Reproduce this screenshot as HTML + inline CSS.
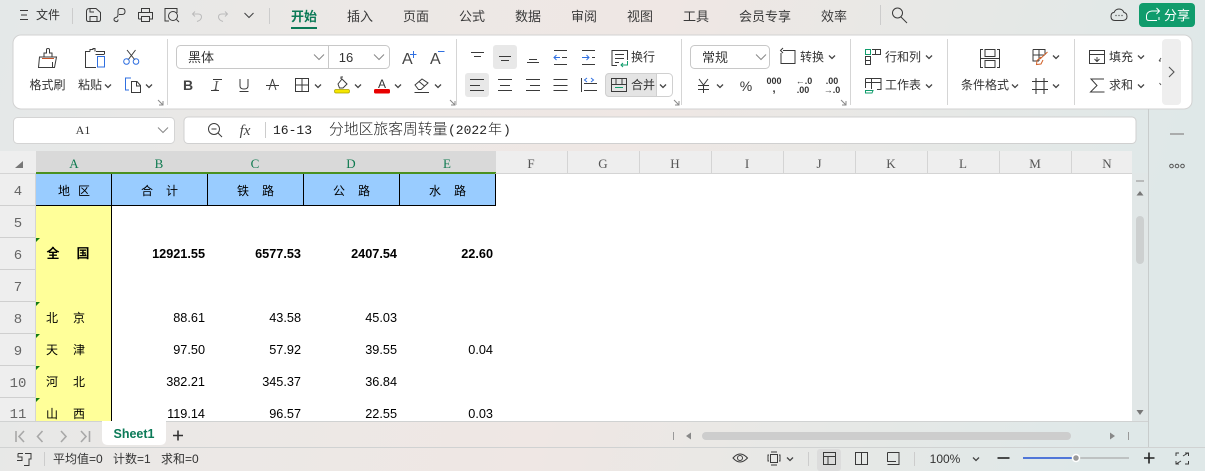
<!DOCTYPE html>
<html><head><meta charset="utf-8"><style>
html,body{margin:0;padding:0;width:1205px;height:471px;overflow:hidden;background:#e8e8e8}
svg{display:block;font-family:"Liberation Sans","Noto Sans CJK SC",sans-serif}
.i{fill:none;stroke:#3a3a3a;stroke-width:1}
.b{fill:none;stroke:#2f6fe0;stroke-width:1}
.t{font-size:12px;fill:#333;text-anchor:middle}
.tab{font-size:13px;fill:#3a3a3a;text-anchor:middle}
.h{font-size:13px;fill:#555;text-anchor:middle;font-family:"Liberation Serif",serif}
.hs{font-size:13px;fill:#0f7a50;text-anchor:middle;font-family:"Liberation Serif",serif}
.r{font-size:14px;fill:#666;text-anchor:middle;font-family:"Liberation Mono",monospace}
.n{font-size:12.7px;fill:#000;text-anchor:end}
.nb{font-size:12.7px;fill:#000;text-anchor:end;font-weight:bold}
.z{font-size:12px;fill:#000;text-anchor:middle;font-family:"Liberation Sans","Noto Sans CJK SC",sans-serif}
.zb{font-size:13px;fill:#000;text-anchor:middle;font-weight:bold}
.f{font-size:15px;fill:#222;font-family:"Noto Sans CJK SC",sans-serif;font-weight:300}
.s{font-size:12px;fill:#333}
.d{font-size:9px;fill:#333;text-anchor:middle;font-weight:bold}
</style></head><body>
<svg xmlns="http://www.w3.org/2000/svg" width="1205" height="471" viewBox="0 0 1205 471">
<defs>
<linearGradient id="bg" x1="0" y1="0" x2="1" y2="0.12">
<stop offset="0" stop-color="#e4e8e8"/><stop offset=".25" stop-color="#ebe8e6"/><stop offset=".55" stop-color="#efe7e4"/><stop offset=".8" stop-color="#e6e8e6"/><stop offset="1" stop-color="#dfe8e8"/>
</linearGradient>
<path id="ch" d="M-3 -1.500 L0 1.500 L3 -1.500" fill="none" stroke="#444" stroke-width="1.300"/>
<path id="chl" d="M-5 -2.500 L0 2.500 L5 -2.500" fill="none" stroke="#888" stroke-width="1"/>
<path id="ln" d="M0 0 L5 5 M5 1 V5 H1" fill="none" stroke="#888" stroke-width="1"/>
</defs>
<rect width="1205" height="471" fill="url(#bg)"/>

<!-- title bar -->
<path class="i" d="M20 10.500H28M21 15H27M20 19.500H28"/>
<text x="48" y="19" class="t">文件</text>
<path d="M72.500 8V24M269.500 8V24M880.500 5V25" stroke="#ccc"/>
<path class="i" d="M86.500 11.500Q86.500 8.500 89.500 8.500H96L100.500 12.500V19.500Q100.500 21.500 98.500 21.500H88.500Q86.500 21.500 86.500 19.500ZM90 21.500V16.500H97V21.500M90 9V12H94"/>
<path class="i" d="M119 14.500H122Q125 14.500 125 11.500T122 8.500H120Q118 8.500 118 11V14.500Q118 17 116 17.500H116Q114 18 114 19.500T116 21.500T118 19.500"/>
<path class="i" d="M141.500 12V8.500H149.500V12M138.500 19V12.500H152.500V19H149M141.500 16.500H149.500V21.500H141.500ZM138.500 19H141"/>
<path class="i" d="M172 8.500H165V21H169M172 8.500 177 8.500V13"/><circle class="i" cx="173" cy="16" r="4.500"/><path class="i" d="M176.500 19.500 179 22"/>
<path d="M195 11.500 192.500 14 195 16.500M193 14H198Q201.500 14 201.500 17T197 21.500" fill="none" stroke="#bbb"/>
<path d="M225 11.500 227.500 14 225 16.500M227 14H222Q218.500 14 218.500 17T223 21.500" fill="none" stroke="#bbb"/>
<path d="M244.500 13 249 17.500 253.500 13" fill="none" stroke="#444" stroke-width="1.100"/>
<text x="304" y="21" class="tab" style="fill:#0b7a57;font-weight:bold">开始</text>
<rect x="291" y="27" width="26" height="2" fill="#0b7a57"/>
<text x="360" y="21" class="tab">插入</text>
<text x="416" y="21" class="tab">页面</text>
<text x="472" y="21" class="tab">公式</text>
<text x="528" y="21" class="tab">数据</text>
<text x="584" y="21" class="tab">审阅</text>
<text x="640" y="21" class="tab">视图</text>
<text x="696" y="21" class="tab">工具</text>
<text x="765" y="21" class="tab">会员专享</text>
<text x="834" y="21" class="tab">效率</text>
<circle class="i" cx="897.500" cy="13" r="5"/><path class="i" d="M901 17 907 23"/>
<path class="i" d="M1115 20.500Q1111 20.500 1111 16.500T1114 12.500Q1115.500 9 1119 9T1124 12.500Q1127 13 1127 16.500T1123 20.500Z"/>
<path d="M1115.500 15.500H1116.500M1118.500 15.500H1119.500M1121.500 15.500H1122.500" stroke="#333" stroke-width="1.200"/>
<rect x="1139" y="3" width="56" height="24" rx="4" fill="#109c6c"/>
<path d="M1157 20.500H1149Q1146.500 20.500 1146.500 18V15.500Q1147 11.500 1152 11H1159M1156.500 8 1159.500 11 1156.500 14M1159 17V20" fill="none" stroke="#fff"/>
<text x="1177" y="20" style="font-size:13px;fill:#fff;text-anchor:middle">分享</text>

<!-- ribbon -->
<rect x="13" y="35" width="1179" height="74" rx="8" fill="#fff" stroke="#d2d2d2" stroke-width="1"/>
<path d="M167.500 39V105M456.500 39V105M681.500 39V105M850.500 39V105M947.500 39V105M1074.500 39V105" stroke="#d5d5d5"/>
<rect x="1162" y="39" width="19" height="66" rx="4" fill="#eeeeee"/>
<path d="M1169 67 1174 72 1169 77" fill="none" stroke="#555" stroke-width="1.100"/>

<!-- painter -->
<path class="i" d="M39.500 57H56.500L54.500 67.500H38.500ZM44 57V53H46.500V49.500Q46.500 48.500 48 48.500T49.500 49.500V53H52V57M52.500 67V62"/>
<path d="M42 58.500H54" stroke="#c8552a" stroke-width="1"/>
<text x="47.500" y="89" class="t">格式刷</text>
<path class="i" d="M96 51.500H104.500V54M90 51.500H85.500V67.500H96M90 51.500V49.500H93V48.500H95V49.500 51.500"/>
<rect class="b" x="97.500" y="56.500" width="7" height="10.500"/>
<path class="i" d="M95.500 54.500H104.500"/>
<text x="90" y="89" class="t">粘贴</text><use href="#ch" x="108" y="86"/>
<path d="M127 50 135 60M135.500 50 128 60" fill="none" stroke="#3a3a3a"/>
<circle class="b" cx="126.500" cy="61.500" r="2.800"/><circle class="b" cx="136" cy="61.500" r="2.800"/>
<path class="b" d="M131 78H125.500V90H129"/>
<path class="i" d="M131.500 81.500H137L140.500 85.500V92.500H131.500ZM136.500 82V86H140"/>
<use href="#ch" x="149" y="86"/>
<use href="#ln" x="158" y="100"/>

<!-- font -->
<rect x="176.500" y="45.500" width="213" height="23" rx="4" fill="#fff" stroke="#c8c8c8"/>
<path d="M328.500 46V68" stroke="#c8c8c8"/>
<text x="188" y="62" style="font-size:13px;fill:#333">黑体</text><use href="#chl" x="319" y="57"/>
<text x="346" y="62" style="font-size:13px;fill:#333;text-anchor:middle">16</text><use href="#chl" x="379" y="57"/>
<text x="402" y="64" style="font-size:16px;fill:#444">A</text><path class="b" d="M410 54.500H416.500M413.500 51V58"/>
<text x="430" y="64" style="font-size:16px;fill:#444">A</text><path class="b" d="M438 51.500H444.500"/>
<text x="188" y="90" style="font-size:14px;font-weight:bold;fill:#444;text-anchor:middle">B</text>
<text x="216" y="90" style="font-size:14px;font-style:italic;fill:#555;text-anchor:middle;font-family:'Liberation Serif',serif">I</text><path class="i" d="M211 90.500H219M213 79.500H222"/>
<path class="i" d="M240 79V86Q240 89 244 89T248 86V79M239.500 91.500H248.500"/>
<path class="i" d="M266 85.500H279M272.500 79 269 90M272.500 79 276 90"/>
<rect class="i" x="295.500" y="78.500" width="13" height="13"/><path class="i" d="M302 78V92M295 85H309"/>
<use href="#ch" x="318" y="86"/>
<path class="i" d="M338 84 342 79 347 84 343 88H339.500ZM341 79V77H343"/>
<rect x="334.500" y="89.500" width="15" height="3.500" rx="1.500" fill="#f5e600" stroke="#a8a100" stroke-width=".7"/>
<use href="#ch" x="358" y="86"/>
<text x="382" y="88" style="font-size:12px;fill:#333;text-anchor:middle">A</text>
<rect x="374" y="89" width="16" height="4.500" rx="1.500" fill="#e80000"/>
<use href="#ch" x="398" y="86"/>
<path class="i" d="M415 85 422 79 428 83 421 89.500H418.500ZM419 81.500 425 86.500M414.500 92.500H429"/>
<use href="#ch" x="438" y="86"/>
<use href="#ln" x="450" y="100"/>

<!-- align -->
<rect x="493" y="45" width="24" height="24" rx="3" fill="#e8e8e8"/>
<rect x="465" y="73" width="24" height="24" rx="3" fill="#e8e8e8"/>
<path class="i" d="M471 52.500H484M474 56.500H481"/>
<path class="i" d="M499 56.500H511M501 60.500H509"/>
<path class="i" d="M527 62.500H539M529 59.500H537"/>
<path class="b" d="M560 57.500H554M556.500 55 554 57.500 556.500 60"/>
<path class="i" d="M554 50.500H567M562 57.500H567M554 64.500H567"/>
<path class="b" d="M582 57.500H589M586.500 55 589 57.500 586.500 60"/>
<path class="i" d="M582 50.500H595M592 57.500H595M582 64.500H595"/>
<path class="i" d="M617 65.500H612V50.500H627.500V60M615 54.500H624M615 58.500H624M615 62.500H619"/>
<path d="M627.500 61V65H621M623 63 621 65 623 67" fill="none" stroke="#109c6c"/>
<text x="643" y="61" class="t">换行</text>

<path class="i" d="M470 79.500H484M470 85.500H480M470 90.500H484"/>
<path class="i" d="M498 79.500H512M500 85.500H510M498 90.500H512"/>
<path class="i" d="M526 79.500H540M530 85.500H540M526 90.500H540"/>
<path class="i" d="M553.500 79.500H567.500M553.500 85.500H567.500M553.500 90.500H567.500"/>
<path class="i" d="M581.500 78V92M584 83.500H597M584 90.500H597"/>
<path class="b" d="M587 78 584.500 80 587 82M591 78 593.500 80 591 82"/>
<rect x="605.500" y="73.500" width="67" height="23" rx="4" fill="#fff" stroke="#d0d0d0"/>
<path d="M609.500 73.500H656.500V96.500H609.500Q605.500 96.500 605.500 92.500V77.500Q605.500 73.500 609.500 73.500Z" fill="#e4e4e4" stroke="#d0d0d0"/>
<rect class="i" x="611.500" y="78.500" width="15" height="13"/>
<path class="i" d="M616 78V84M622 78V84M611 84.500H627"/>
<path d="M615 87.500H623" stroke="#109c6c"/>
<text x="643" y="89" class="t">合并</text><use href="#ch" x="663" y="86"/>
<use href="#ln" x="674" y="100"/>

<!-- number -->
<rect x="690.500" y="45.500" width="79" height="23" rx="4" fill="#fff" stroke="#c8c8c8"/>
<text x="715" y="62" class="t" style="font-size:13px">常规</text><use href="#chl" x="761" y="57"/>
<path class="i" d="M783 50.500H795V61M783 48 780.500 50.500 783 53M793 63.500H781V53M795 60.500 795 63.500H792"/>
<text x="812" y="61" class="t">转换</text><use href="#ch" x="832" y="57"/>
<path class="i" d="M699 79 703.500 85 708 79M698 85.500H709M698 89.500H709M703.500 85V93"/><use href="#ch" x="720" y="86"/>
<text x="746" y="91" style="font-size:14px;fill:#333;text-anchor:middle">%</text>
<text x="774" y="84" class="d">000</text><text x="774" y="92" style="font-size:11px;fill:#333;text-anchor:middle;font-weight:bold">,</text>
<text x="804" y="84" class="d">←.0</text><text x="803" y="93" class="d">.00</text>
<text x="832" y="84" class="d">.00</text><text x="832" y="93" class="d">→.0</text>
<use href="#ln" x="841" y="100"/>

<!-- rows cols -->
<rect x="865.500" y="49.500" width="5" height="5" fill="none" stroke="#109c6c"/>
<path class="i" d="M872 49.500H880.500V54.500H872M875.500 50V54M865.500 56.500H870.500V64.500H865.500ZM866 60.500H870"/>
<text x="903" y="61" class="t">行和列</text><use href="#ch" x="929" y="57"/>
<path class="i" d="M865.500 78.500H881V89.500H877M865.500 78.500V88M865 82.500H881M871.500 78.500V89"/>
<path d="M865.500 90.500H873L872 93H865.500Z" fill="none" stroke="#109c6c"/>
<text x="903" y="89" class="t">工作表</text><use href="#ch" x="929" y="86"/>

<!-- cond -->
<path class="i" d="M983 49.500H980.500V67.500H983M997 49.500H999.500V67.500H997M985 49.500H995V56.500H985ZM985 60.500H995V67.500H985ZM981 58.500H999"/>
<text x="985" y="89" class="t">条件格式</text><use href="#ch" x="1015" y="86"/>
<path class="i" d="M1033 49.500H1045V55M1033 49.500V61H1039M1039 49.500V61M1033 55H1045"/>
<path d="M1047.500 52 1040 59M1041 57 1037 60.500 1036.500 64.500 1041 64 1043 60" fill="none" stroke="#d2622a"/>
<use href="#ch" x="1056" y="57"/>
<path class="i" d="M1032 81.500H1048M1032 89.500H1048M1036 78V94M1044 78V94" style="stroke-width:1.100"/>
<use href="#ch" x="1056" y="86"/>

<!-- fill sum -->
<rect class="i" x="1089.500" y="50.500" width="15" height="13"/>
<path class="i" d="M1089.500 54.500H1104.500M1097 57V61M1094.500 59 1097 61.500 1099.500 59"/>
<text x="1121" y="61" class="t">填充</text><use href="#ch" x="1141" y="57"/>
<path class="i" d="M1104 79H1091L1097 85.500 1090.500 92H1104.500"/>
<text x="1121" y="89" class="t">求和</text><use href="#ch" x="1141" y="86"/>
<path d="M1159 61 1161 58M1159 61H1161M1159.500 83 1161 85" stroke="#555" fill="none"/>

<!-- formula bar -->
<rect x="13.500" y="117.500" width="161" height="26" rx="4" fill="#fff" stroke="#d4d4d4"/>
<text x="83" y="134" style="font-size:12px;fill:#333;text-anchor:middle;font-family:'Liberation Serif',serif">A1</text>
<use href="#chl" x="163" y="130"/>
<rect x="184" y="117" width="952" height="26.500" rx="4" fill="#fff" stroke="#d0d0d0"/>
<circle class="i" cx="214" cy="129" r="5.500"/><path class="i" d="M211.500 129H216.500M218 133 222 137"/>
<text x="245" y="135" style="font-size:15px;font-style:italic;fill:#444;text-anchor:middle;font-family:'Liberation Serif',serif">fx</text>
<path d="M265.500 122V138" stroke="#ccc"/>
<text x="273" y="134" style="font-size:13px;fill:#222;font-family:'Liberation Mono',monospace">16-13</text>
<text x="329" y="134" class="f" style="font-size:14.800px">分地区旅客周转量</text>
<text x="448" y="134" style="font-size:13px;fill:#222;font-family:'Liberation Mono','Noto Sans CJK SC',monospace">(2022</text>
<text x="488" y="134" class="f" style="font-size:14px">年</text>
<text x="503" y="134" style="font-size:13px;fill:#222;font-family:'Liberation Mono',monospace">)</text>

<!-- grid -->
<rect x="0" y="151" width="1132" height="270" fill="#eeeeee"/>
<rect x="36" y="174" width="1096" height="247" fill="#fff"/>
<rect x="36" y="151" width="460" height="22" fill="#d9d9d9"/>
<rect x="36" y="172" width="460" height="2" fill="#4a9020"/>
<path d="M23 161 23 168 15 168Z" fill="#777"/>
<path d="M0 205.500H36M0 237.500H36M0 269.500H36M0 301.500H36M0 333.500H36M0 365.500H36M0 397.500H36" stroke="#cfcfcf"/>
<path d="M0 173.500H36M495.500 173.500H1132M35.500 174V421M567.500 151V173M639.500 151V173M711.500 151V173M783.500 151V173M855.500 151V173M927.500 151V173M999.500 151V173M1071.500 151V173" stroke="#d4d4d4"/>
<text x="74" y="168" class="hs">A</text><text x="159" y="168" class="hs">B</text><text x="255" y="168" class="hs">C</text><text x="351" y="168" class="hs">D</text><text x="447" y="168" class="hs">E</text>
<text x="531" y="168" class="h">F</text><text x="603" y="168" class="h">G</text><text x="675" y="168" class="h">H</text><text x="747" y="168" class="h">I</text><text x="819" y="168" class="h">J</text><text x="891" y="168" class="h">K</text><text x="963" y="168" class="h">L</text><text x="1035" y="168" class="h">M</text><text x="1107" y="168" class="h">N</text>
<text x="18" y="195" class="r">4</text><text x="18" y="227" class="r">5</text><text x="18" y="259" class="r">6</text><text x="18" y="291" class="r">7</text><text x="18" y="323" class="r">8</text><text x="18" y="355" class="r">9</text><text x="18" y="387" class="r">10</text><text x="18" y="418" class="r">11</text>

<rect x="36" y="174" width="460" height="31" fill="#99ccff"/>
<rect x="36" y="206" width="75" height="215" fill="#ffff99"/>
<path d="M36 205.500H496M111.500 174V421M207.500 174V205M303.500 174V205M399.500 174V205M495.500 174V205" stroke="#000"/>
<path d="M36 238H40L36 242ZM36 302H40L36 306ZM36 334H40L36 338ZM36 366H40L36 370ZM36 398H40L36 402Z" fill="#137a13"/>

<text x="64" y="195" class="z">地</text><text x="84" y="195" class="z">区</text>
<text x="147" y="195" class="z">合</text><text x="172" y="195" class="z">计</text>
<text x="243" y="195" class="z">铁</text><text x="268" y="195" class="z">路</text>
<text x="339" y="195" class="z">公</text><text x="364" y="195" class="z">路</text>
<text x="435" y="195" class="z">水</text><text x="460" y="195" class="z">路</text>
<text x="53" y="258" class="zb">全</text><text x="83" y="258" class="zb">国</text>
<text x="205" y="258" class="nb">12921.55</text><text x="301" y="258" class="nb">6577.53</text><text x="397" y="258" class="nb">2407.54</text><text x="493" y="258" class="nb">22.60</text>
<text x="52" y="322" class="z">北</text><text x="79" y="322" class="z">京</text>
<text x="205" y="322" class="n">88.61</text><text x="301" y="322" class="n">43.58</text><text x="397" y="322" class="n">45.03</text>
<text x="52" y="354" class="z">天</text><text x="79" y="354" class="z">津</text>
<text x="205" y="354" class="n">97.50</text><text x="301" y="354" class="n">57.92</text><text x="397" y="354" class="n">39.55</text><text x="493" y="354" class="n">0.04</text>
<text x="52" y="386" class="z">河</text><text x="79" y="386" class="z">北</text>
<text x="205" y="386" class="n">382.21</text><text x="301" y="386" class="n">345.37</text><text x="397" y="386" class="n">36.84</text>
<text x="52" y="418" class="z">山</text><text x="79" y="418" class="z">西</text>
<text x="205" y="418" class="n">119.14</text><text x="301" y="418" class="n">96.57</text><text x="397" y="418" class="n">22.55</text><text x="493" y="418" class="n">0.03</text>

<!-- v scrollbar / right -->
<rect x="1132" y="173" width="16" height="248" fill="#e1e7e7"/>
<path d="M1136 181H1144" stroke="#aaa" stroke-width="1.500"/>
<path d="M1140 191 1143.500 195.500H1136.500Z" fill="#777"/>
<rect x="1136" y="216" width="8" height="48" rx="4" fill="#cdd0d0"/>
<path d="M1140 415 1143.500 410H1136.500Z" fill="#777"/>
<path d="M1148.500 109V447" stroke="#c8cccc"/>
<path d="M1170 134H1184" stroke="#999" stroke-width="1.500"/>
<circle cx="1171.500" cy="166" r="1.800" fill="none" stroke="#555"/><circle cx="1177" cy="166" r="1.800" fill="none" stroke="#555"/><circle cx="1182.500" cy="166" r="1.800" fill="none" stroke="#555"/>

<!-- tabs -->
<path d="M0 421.500H1148M0 447.500H1205" stroke="#d0d2d2"/>
<path d="M16 431V442M24 431 19 436.500 24 442M42.500 431 37.500 436.500 42.500 442M61 431 66 436.500 61 442M81 431 86 436.500 81 442M89.500 431V442" fill="none" stroke="#a8a8a8" stroke-width="1.600"/>
<path d="M102 421H166V439Q166 445 160 445H108Q102 445 102 439Z" fill="#fff"/>
<text x="134" y="438" style="font-size:12.500px;font-weight:bold;fill:#0b7a57;text-anchor:middle">Sheet1</text>
<path d="M173 435.500H183M178 430.500V440.500" stroke="#333" stroke-width="1.600"/>
<path d="M673.500 432V440M1128.500 432V440" stroke="#999"/>
<path d="M686 436 691 432.500V439.500ZM1115 436 1110 432.500V439.500Z" fill="#888"/>
<rect x="702" y="432" width="369" height="8" rx="4" fill="#cdcdcd"/>

<!-- status -->
<path class="i" d="M18 453.500H23M18 453.500V457H22V460.500H17M25 453.500H31V459L29 459V465.500H24"/>
<path d="M44.500 452V466M808.500 452V466M914.500 452V466" stroke="#ccc"/>
<text x="53" y="463" class="s">平均值=0</text><text x="113" y="463" class="s">计数=1</text><text x="161" y="463" class="s">求和=0</text>
<path class="i" d="M733 458Q740 450 747.500 458Q740 466 733 458Z"/><circle class="i" cx="740" cy="458" r="2.500"/>
<rect class="i" x="770.500" y="454.500" width="7" height="8"/>
<path class="i" d="M769 455H768V461H769M779 455H780V461H779M771 452H777M771 465H777"/>
<use href="#ch" x="790" y="459"/>
<rect x="817" y="449" width="24" height="22" rx="3" fill="#dcdcdc"/>
<rect class="i" x="823.500" y="452.500" width="12" height="12"/><path class="i" d="M823.500 456.500H835.500M828 456.500V464.500"/>
<rect class="i" x="855.500" y="452.500" width="12" height="12"/><path class="i" d="M861.500 452.500V464.500"/>
<path class="i" d="M887.500 452.500H899V464.500H887.500M887.500 452.500V461.500H896"/>
<text x="945" y="463" style="font-size:12px;fill:#333;text-anchor:middle">100%</text>
<use href="#ch" x="976" y="459"/>
<path d="M997.500 458H1009.500" stroke="#222" stroke-width="1.600"/>
<path d="M1023 458H1129" stroke="#aaa" stroke-width="1.200"/>
<path d="M1023 458H1076" stroke="#2456d8" stroke-width="1.600"/>
<circle cx="1076" cy="458" r="3.500" fill="#999" stroke="#fff" stroke-width="1.500"/>
<path d="M1144 458H1154.500M1149 452.500V463.500" stroke="#222" stroke-width="1.600"/>
<path class="i" d="M1176 456V453H1179M1185 453H1188.500V456M1188.500 461V464H1185M1179 464H1176V461M1183 456 1188 453M1181 461 1176 464"/>
</svg>
</body></html>
